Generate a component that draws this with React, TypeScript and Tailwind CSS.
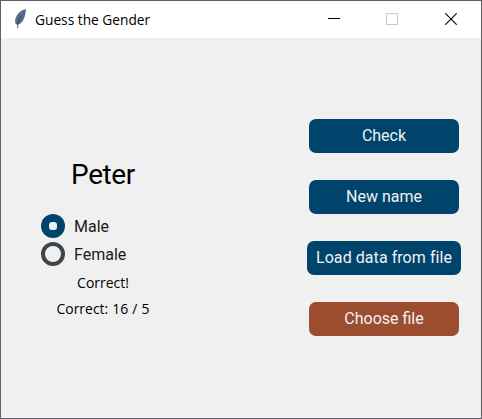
import React from "react";

function Feather() {
  return (
    <svg width="14" height="20" viewBox="0 0 14 20" className="mb-px shrink-0">
      <path d="M12.800 0C8 .7 3.700 5 2.400 10c-.6 2.200-.3 4 .6 5.500h2.600c2.300-.9 4.600-3.200 5.600-6.500 1-3 1.900-6.500 1.600-9Z" fill="#656b74" />
      <path d="M11 2C7.800 3.800 4.700 7.500 3.900 11c-.2 1.400 0 2.500.4 3.200 2.200-1 4.300-3.200 5.200-5.800.7-2.200 1.500-4.400 1.500-6.400Z" fill="#3f6fab" />
      <path d="M8 7C6 10 4.800 14 4.600 19" fill="none" stroke="#39414d" strokeWidth=".9" />
    </svg>
  );
}

function TitleBar() {
  return (
    <header className="flex h-[37px] items-center bg-white pl-3">
      <Feather />
      <span className="mb-0.5 ml-2 w-[126px] origin-left scale-x-[.915] whitespace-nowrap font-['Open_Sans','Noto_Sans',sans-serif] text-[15px] leading-5 text-black">
        Guess the Gender
      </span>
      <div className="mr-6 mb-px ml-auto flex items-center">
        <svg width="12" height="12" viewBox="0 0 12 12" shapeRendering="crispEdges">
          <rect x="0" y="5" width="12" height="1" fill="#000" />
        </svg>
        <svg width="12" height="12" viewBox="0 0 12 12" shapeRendering="crispEdges" className="mr-[47px] ml-[46px]">
          <rect x=".5" y=".5" width="11" height="11" fill="none" stroke="#ccc" />
        </svg>
        <svg width="12" height="12" viewBox="0 0 12 12">
          <path d="M.3 .3 11.700 11.700M11.700 .3 .3 11.700" stroke="#000" strokeWidth="1.100" />
        </svg>
      </div>
    </header>
  );
}

function Option({ label, checked }: { label: string; checked?: boolean }) {
  return (
    <label className="flex h-7 items-center gap-[9px]">
      <span
        className={
          checked
            ? "flex size-6 items-center justify-center rounded-full bg-[#00446b]"
            : "size-6 rounded-full border-4 border-[#3e454a]"
        }
      >
        {checked && <span className="size-2 rounded-[3px] bg-[#f0f0f0]" />}
      </span>
      <span className="pt-0.5 text-[16px] leading-5 text-[#1a1a1a]">{label}</span>
    </label>
  );
}

function Button({ children, className }: { children: string; className: string }) {
  return (
    <button className={`h-[34px] whitespace-nowrap rounded-[7px] pb-px text-[16px] leading-5 text-[#f0f2f4] ${className}`}>
      {children}
    </button>
  );
}

export default function App() {
  return (
    <div className="flex h-[419px] w-[482px] flex-col overflow-hidden border border-[#5f6064] bg-[#f0f0f0] font-[Roboto,sans-serif]">
      <TitleBar />
      <main className="flex flex-1 justify-between">
        <section className="flex w-[204px] flex-col pt-[119px]">
          <h1 className="text-center text-[28px] leading-[36px] tracking-[-0.4px] text-black">Peter</h1>
          <div className="mt-[19px] pl-10">
            <Option label="Male" checked />
            <Option label="Female" />
          </div>
          <div className="mt-1 flex scale-x-[.93] flex-col items-center gap-[6px] font-['Open_Sans','Noto_Sans',sans-serif] text-[15px] leading-5 text-black">
            <p>Correct!</p>
            <p className="[word-spacing:0.5px]">Correct: 16 / 5</p>
          </div>
        </section>
        <section className="mr-5 flex flex-col items-center gap-[27px] pt-[81px]">
          <Button className="w-[150px] bg-[#00446b]">Check</Button>
          <Button className="w-[150px] bg-[#00446b]">New name</Button>
          <Button className="w-[154px] bg-[#00446b] tracking-[0.06px]">Load data from file</Button>
          <Button className="w-[150px] bg-[#9c4d30]">Choose file</Button>
        </section>
      </main>
    </div>
  );
}
